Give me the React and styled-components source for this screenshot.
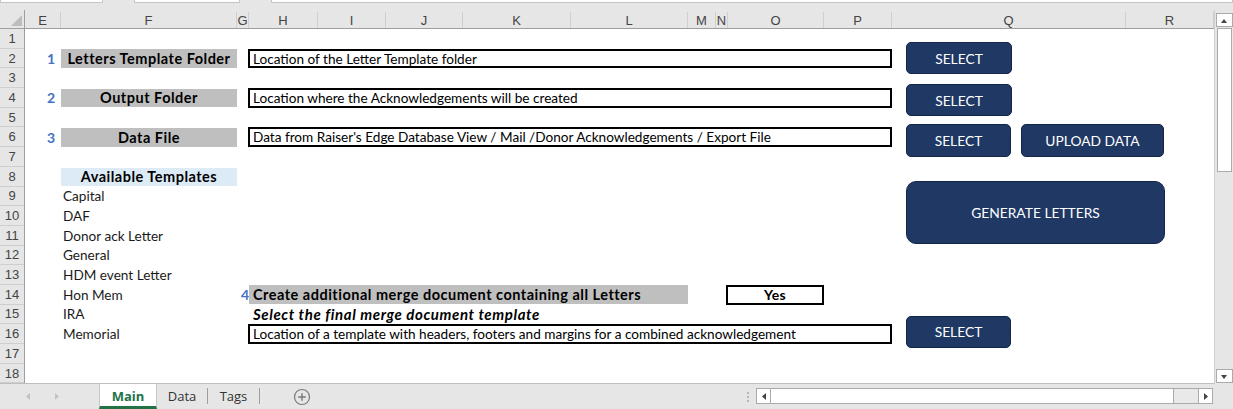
import React from 'react';
import styled, { createGlobalStyle } from 'styled-components';

const GlobalStyle = createGlobalStyle`
  html, body {
    margin: 0;
    padding: 0;
    overflow: hidden;
    background: #e6e6e6;
  }
  * { box-sizing: border-box; }
`;

const ROW_H = 19.7;
const COLS = `[E] 36px [F] 176px [G] 12px [H] 69px [I] 68px [J] 77px [K] 108px [L] 117px [M] 28px [N] 12px [O] 96px [P] 68px [Q] 234px [R] 88px [end]`;
const HEADER_COLS = [
  ['E', 36], ['F', 176], ['G', 12], ['H', 69], ['I', 68], ['J', 77], ['K', 108],
  ['L', 117], ['M', 28], ['N', 12], ['O', 96], ['P', 68], ['Q', 234], ['R', 88],
];

const NAVY = '#1f3864';

// window shell
const Window = styled.div`
  width: 1233px;
  height: 409px;
  display: flex;
  flex-direction: column;
  background: #e6e6e6;
  font-family: Lato, "Open Sans", sans-serif;
  overflow: hidden;
`;

const FormulaStrip = styled.div`
  height: 10px;
  display: flex;
  align-items: flex-start;
  gap: 31px;
`;

const StripBox = styled.div`
  width: ${p => p.$w}px;
  height: 3px;
  background: #fff;
  border: 1px solid #c6c6c6;
  border-top: none;
`;

const Middle = styled.div`
  flex: 1;
  display: flex;
  min-height: 0;
`;

const GridPane = styled.div`
  width: 1214px;
  display: flex;
  flex-direction: column;
`;

// column header
const ColumnHeader = styled.div`
  height: 19px;
  display: flex;
  border-bottom: 1px solid #9e9e9e;
`;

const Corner = styled.div`
  width: 25px;
  position: relative;
  border-right: 1px solid #9e9e9e;
  &::after {
    content: '';
    position: absolute;
    right: 2px;
    bottom: 2px;
    border-style: solid;
    border-width: 0 0 11px 11px;
    border-color: transparent transparent #bdbdbd transparent;
  }
`;

const ColLetter = styled.div`
  width: ${p => p.$w}px;
  display: flex;
  align-items: center;
  justify-content: center;
  font-family: "Liberation Sans", Arial, sans-serif;
  font-size: 13px;
  color: #444;
  border-right: 1px solid #cfcfcf;
  margin-top: 2px;
  overflow: hidden;
`;

// body
const Body = styled.div`
  flex: 1;
  display: flex;
  overflow: hidden;
  border-bottom: 1px solid #bdbdbd;
`;

const RowHeaders = styled.div`
  width: 25px;
  display: flex;
  flex-direction: column;
  border-right: 1px solid #9e9e9e;
  background: #e6e6e6;
`;

const RowNum = styled.div`
  height: ${ROW_H}px;
  flex-shrink: 0;
  display: flex;
  align-items: center;
  justify-content: center;
  font-family: "Liberation Sans", Arial, sans-serif;
  font-size: 13px;
  color: #444;
  border-bottom: 1px solid #cfcfcf;
`;

const Sheet = styled.div`
  flex: 1;
  background: #fff;
  display: grid;
  grid-template-columns: ${COLS};
  grid-template-rows: repeat(18, ${ROW_H}px);
  align-content: start;
  font-size: 13.6px;
  color: #000;
`;

const Cell = styled.div`
  grid-column: ${p => p.$col};
  grid-row: ${p => p.$row};
  display: flex;
  align-items: center;
  white-space: nowrap;
  min-width: 0;
`;

const StepNum = styled(Cell)`
  justify-content: flex-end;
  padding-right: ${p => p.$pad ?? 6}px;
  color: #4472c4;
  font-weight: 700;
  font-size: 14px;
`;

const Label = styled(Cell)`
  background: #bfbfbf;
  font-weight: 700;
  font-size: 14.5px;
  letter-spacing: 0.5px;
  justify-content: ${p => (p.$left ? 'flex-start' : 'center')};
  padding-left: ${p => (p.$left ? 4 : 0)}px;
  margin: 0.5px 0;
`;

const TemplatesTitle = styled(Cell)`
  background: #ddebf7;
  font-weight: 700;
  font-size: 14.5px;
  letter-spacing: 0.5px;
  justify-content: center;
  margin: 1px 0;
`;

const TemplateItem = styled(Cell)`
  padding-left: 2px;
  color: #1a1a1a;
`;

const InputBox = styled(Cell)`
  border: 2px solid #000;
  margin-left: -1px;
  padding-left: 3px;
  overflow: hidden;
`;

const YesBox = styled(Cell)`
  border: 2px solid #000;
  margin-left: -2px;
  justify-content: center;
  font-weight: 700;
  font-size: 14px;
  letter-spacing: 0.3px;
`;

const ItalicNote = styled(Cell)`
  font-weight: 700;
  font-style: italic;
  font-size: 15px;
  letter-spacing: 0.6px;
  padding-left: 4px;
  overflow: visible;
`;

const ButtonRow = styled.div`
  grid-column: ${p => p.$col};
  grid-row: ${p => p.$row};
  align-self: start;
  margin-top: ${p => p.$top}px;
  padding-left: 14px;
  display: flex;
  gap: 10px;
`;

const ShapeButton = styled.button`
  width: ${p => p.$w}px;
  height: ${p => p.$h || 32}px;
  background: ${NAVY};
  border: 1px solid #13254a;
  border-radius: ${p => p.$r || 5}px;
  color: #fff;
  font-family: Lato, "Open Sans", sans-serif;
  font-size: 13.8px;
  padding: 0;
  cursor: pointer;
`;

// vertical scrollbar
const VScroll = styled.div`
  width: 19px;
  display: flex;
  flex-direction: column;
  align-items: center;
  padding: 3px 0 1px;
  border-left: 1px solid #cfcfcf;
`;

const ArrowBox = styled.div`
  width: 17px;
  height: 14px;
  background: #fff;
  border: 1px solid #ababab;
  display: flex;
  align-items: center;
  justify-content: center;
  flex-shrink: 0;
`;

const VThumb = styled.div`
  width: 15px;
  height: 144px;
  margin-top: 1px;
  background: #fff;
  border: 1px solid #ababab;
`;

const Spacer = styled.div`
  flex: 1;
`;

// sheet tabs
const TabBar = styled.div`
  height: 25px;
  display: flex;
  align-items: stretch;
  background: #e6e6e6;
`;

const NavArrows = styled.div`
  width: 99px;
  display: flex;
  align-items: center;
  padding-left: 25px;
  gap: 23px;
`;

const Tab = styled.div`
  width: ${p => p.$w}px;
  display: flex;
  align-items: center;
  justify-content: center;
  font-family: "Open Sans", Lato, sans-serif;
  font-size: 13px;
  color: ${p => (p.$active ? '#217346' : '#333')};
  font-weight: ${p => (p.$active ? 700 : 400)};
  background: ${p => (p.$active ? '#fff' : 'transparent')};
  border-bottom: 3px solid ${p => (p.$active ? '#217346' : 'transparent')};
  border-left: ${p => (p.$active ? '1px solid #c6c6c6' : 'none')};
  border-right: 1px solid ${p => (p.$active ? '#c6c6c6' : 'transparent')};
  position: relative;
  padding-top: 2px;
  &::after {
    content: '';
    display: ${p => (p.$sep ? 'block' : 'none')};
    position: absolute;
    right: -1px;
    top: 4px;
    bottom: 2px;
    width: 1px;
    background: #9e9e9e;
  }
`;

const AddSheet = styled.div`
  width: 70px;
  display: flex;
  align-items: center;
  justify-content: center;
  padding-left: 14px;
`;

const TabFill = styled.div`
  flex: 1;
`;

const SplitDots = styled.div`
  width: 16px;
  display: flex;
  flex-direction: column;
  align-items: center;
  justify-content: center;
  gap: 2px;
`;

const Dot = styled.span`
  width: 2px;
  height: 2px;
  background: #b5b5b5;
`;

const HScroll = styled.div`
  width: 457px;
  margin: 4px 20px 5px 0;
  display: flex;
  border: 1px solid #ababab;
  background: #e9e9e9;
`;

const HArrow = styled.div`
  width: 14px;
  background: #fff;
  display: flex;
  align-items: center;
  justify-content: center;
  border-${p => p.$side}: 1px solid #ababab;
`;

const HThumb = styled.div`
  width: 403px;
  background: #fff;
  border-right: 1px solid #ababab;
`;

const Tri = ({ dir, color = '#444', size = 6 }) => {
  const pts = {
    up: '0,6 6,6 3,2',
    down: '0,2 6,2 3,6',
    left: '5,0 5,7 1,3.5',
    right: '1,0 1,7 5,3.5',
  }[dir];
  return (
    <svg width={size} height={size + 1} viewBox="0 0 6 7">
      <polygon points={pts} fill={color} />
    </svg>
  );
};

const templates = ['Capital', 'DAF', 'Donor ack Letter', 'General', 'HDM event Letter', 'Hon Mem', 'IRA', 'Memorial'];

export default function App() {
  return (
    <>
      <GlobalStyle />
      <Window>
        <FormulaStrip>
          <StripBox $w={105} />
          <StripBox $w={109} />
          <StripBox $w={983} />
        </FormulaStrip>
        <Middle>
          <GridPane>
            <ColumnHeader>
              <Corner />
              {HEADER_COLS.map(([l, w]) => (
                <ColLetter key={l} $w={w}>{l}</ColLetter>
              ))}
            </ColumnHeader>
            <Body>
              <RowHeaders>
                {Array.from({ length: 18 }, (_, i) => (
                  <RowNum key={i}>{i + 1}</RowNum>
                ))}
              </RowHeaders>
              <Sheet>
                <StepNum $col="E" $row={2}>1</StepNum>
                <Label $col="F" $row={2}>Letters Template Folder</Label>
                <InputBox $col="H / Q" $row={2}>Location of the Letter Template folder</InputBox>
                <ButtonRow $col="Q / end" $row={2} $top={-6.7}>
                  <ShapeButton $w={106}>SELECT</ShapeButton>
                </ButtonRow>

                <StepNum $col="E" $row={4}>2</StepNum>
                <Label $col="F" $row={4}>Output Folder</Label>
                <InputBox $col="H / Q" $row={4}>Location where the Acknowledgements will be created</InputBox>
                <ButtonRow $col="Q / end" $row={4} $top={-4}>
                  <ShapeButton $w={106}>SELECT</ShapeButton>
                </ButtonRow>

                <StepNum $col="E" $row={6}>3</StepNum>
                <Label $col="F" $row={6}>Data File</Label>
                <InputBox $col="H / Q" $row={6}>Data from Raiser's Edge Database View / Mail /Donor Acknowledgements / Export File</InputBox>
                <ButtonRow $col="Q / end" $row={6} $top={-3.5}>
                  <ShapeButton $w={105} $h={33}>SELECT</ShapeButton>
                  <ShapeButton $w={143} $h={33}>UPLOAD DATA</ShapeButton>
                </ButtonRow>

                <TemplatesTitle $col="F" $row={8}>Available Templates</TemplatesTitle>
                {templates.map((t, i) => (
                  <TemplateItem key={t} $col="F" $row={9 + i}>{t}</TemplateItem>
                ))}
                <ButtonRow $col="Q / end" $row="8 / 12" $top={14}>
                  <ShapeButton $w={259} $h={63} $r={10}>GENERATE LETTERS</ShapeButton>
                </ButtonRow>

                <StepNum $col="G" $row={14} $pad={0}>4</StepNum>
                <Label $col="H / M" $row={14} $left>Create additional merge document containing all Letters</Label>
                <YesBox $col="O" $row={14}>Yes</YesBox>
                <ItalicNote $col="H / Q" $row={15}>Select the final merge document template</ItalicNote>
                <InputBox $col="H / Q" $row={16}>Location of a template with headers, footers and margins for a combined acknowledgement</InputBox>
                <ButtonRow $col="Q / end" $row={16} $top={-8.5}>
                  <ShapeButton $w={105}>SELECT</ShapeButton>
                </ButtonRow>
              </Sheet>
            </Body>
          </GridPane>
          <VScroll>
            <ArrowBox><Tri dir="up" /></ArrowBox>
            <VThumb />
            <Spacer />
            <ArrowBox><Tri dir="down" /></ArrowBox>
          </VScroll>
        </Middle>
        <TabBar>
          <NavArrows>
            <Tri dir="left" color="#c2c2c2" />
            <Tri dir="right" color="#c2c2c2" />
          </NavArrows>
          <Tab $w={58} $active>Main</Tab>
          <Tab $w={51} $sep>Data</Tab>
          <Tab $w={52} $sep>Tags</Tab>
          <AddSheet>
            <svg width="18" height="18" viewBox="0 0 18 18">
              <circle cx="9" cy="9" r="7.5" fill="none" stroke="#7a7a7a" strokeWidth="1.2" />
              <path d="M9 5.2v7.6M5.2 9h7.6" stroke="#7a7a7a" strokeWidth="1.4" />
            </svg>
          </AddSheet>
          <TabFill />
          <SplitDots>
            <Dot />
            <Dot />
            <Dot />
          </SplitDots>
          <HScroll>
            <HArrow $side="right"><Tri dir="left" /></HArrow>
            <HThumb />
            <Spacer />
            <HArrow $side="left"><Tri dir="right" /></HArrow>
          </HScroll>
        </TabBar>
      </Window>
    </>
  );
}
